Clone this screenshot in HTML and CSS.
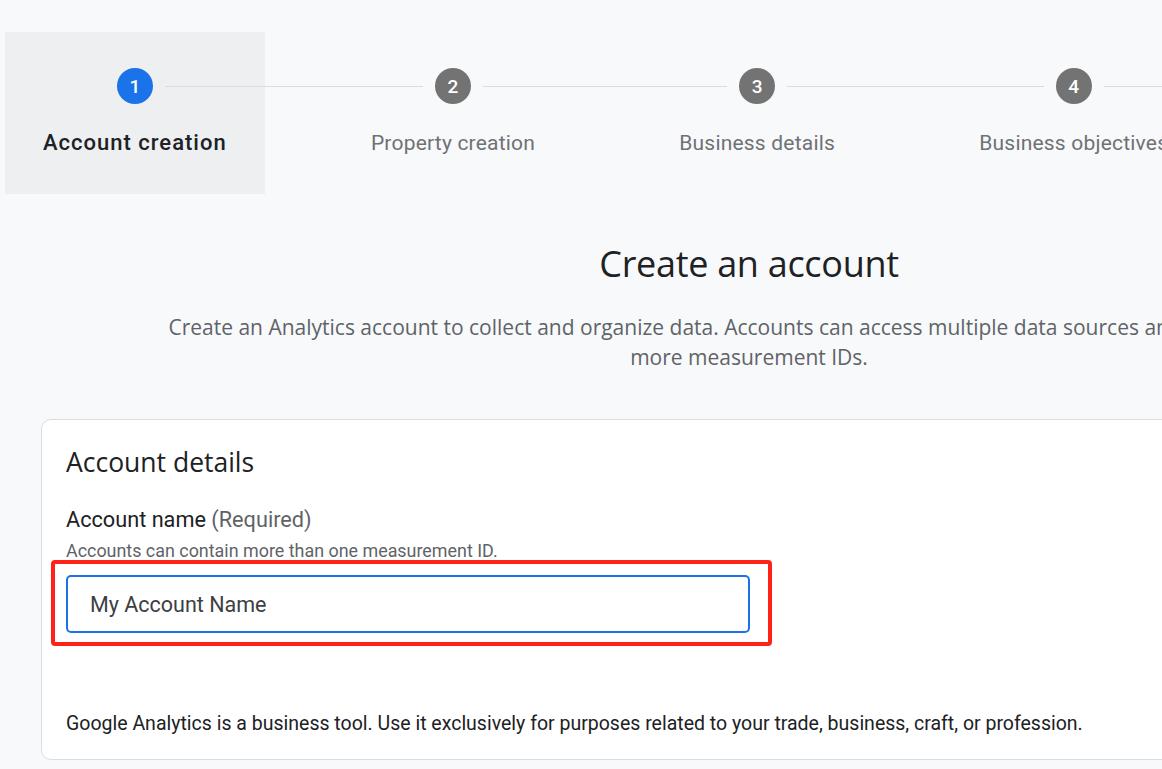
FILE: index.html
```html
<!DOCTYPE html>
<html lang="en">
<head>
<meta charset="utf-8">
<title>Create an account</title>
<link rel="stylesheet" href="styles.css">
</head>
<body>
<div class="page">
  <nav class="stepper">
    <div class="step active first">
      <div class="step-track"><span class="track-line"></span><span class="step-num">1</span><span class="track-line"></span></div>
      <div class="step-label">Account creation</div>
    </div>
    <div class="connector"></div>
    <div class="step">
      <div class="step-track"><span class="track-line"></span><span class="step-num">2</span><span class="track-line"></span></div>
      <div class="step-label">Property creation</div>
    </div>
    <div class="connector"></div>
    <div class="step">
      <div class="step-track"><span class="track-line"></span><span class="step-num">3</span><span class="track-line"></span></div>
      <div class="step-label">Business details</div>
    </div>
    <div class="connector"></div>
    <div class="step">
      <div class="step-track"><span class="track-line"></span><span class="step-num">4</span><span class="track-line"></span></div>
      <div class="step-label">Business objectives</div>
    </div>
    <div class="connector"></div>
    <div class="step last">
      <div class="step-track"><span class="track-line"></span><span class="step-num">5</span><span class="track-line"></span></div>
      <div class="step-label">Data collection</div>
    </div>
  </nav>

  <header class="intro">
    <h1 class="intro-title">Create an account</h1>
    <p class="intro-text">Create an Analytics account to collect and organize data. Accounts can access multiple data sources and contain one or more measurement IDs.</p>
  </header>

  <section class="card">
    <h2 class="card-title">Account details</h2>
    <label class="field-label" for="acct">Account name <span class="req">(Required)</span></label>
    <div class="field-hint">Accounts can contain more than one measurement ID.</div>
    <div class="field-wrap">
      <input id="acct" class="field-input" type="text" value="My Account Name">
      <div class="highlight"></div>
    </div>
    <p class="card-note">Google Analytics is a business tool. Use it exclusively for purposes related to your trade, business, craft, or profession.</p>
  </section>
</div>
</body>
</html>
```

FILE: styles.css
```css
html, body {
  margin: 0;
  padding: 0;
  background: #f8f9fa;
  overflow: hidden;
  height: 100%;
}

body {
  font-family: Roboto, "Noto Sans", "Liberation Sans", sans-serif;
  color: #202124;
}

.page {
  width: 1498px;
  padding-top: 32px;
}

/* Stepper */
.stepper {
  display: flex;
  align-items: flex-start;
  margin: 0 5px;
}

.step {
  display: flex;
  flex-direction: column;
  align-items: stretch;
  padding: 36px 0 51px;
  height: 75px;
}

.step.active {
  background: #eeeff1;
}

.step-track {
  display: flex;
  align-items: center;
  height: 36px;
}

.track-line {
  flex: 1;
  height: 1px;
  background: #dadce0;
}

.step-num {
  width: 36px;
  height: 36px;
  border-radius: 50%;
  background: #737373;
  color: #fff;
  font-size: 19px;
  font-weight: 500;
  display: flex;
  align-items: center;
  justify-content: center;
  margin: 0 12px;
  flex: none;
}

.step.active .step-num {
  background: #1a73e8;
}

.step.first .track-line:first-child,
.step.last .track-line:last-child {
  visibility: hidden;
}

.step-label {
  margin-top: 27px;
  padding: 0 38px;
  font-size: 21px;
  line-height: 24px;
  color: #6f7175;
  white-space: nowrap;
  text-align: center;
  letter-spacing: 0.2px;
}

.step.active .step-label {
  color: #202124;
  font-weight: 500;
  font-size: 22px;
  letter-spacing: 1px;
}

.connector {
  flex: 1;
  height: 1px;
  background: #dadce0;
  margin-top: 54px;
}

/* Intro */
.intro {
  text-align: center;
  margin-top: 46px;
}

.intro-title {
  margin: 0;
  font-family: "Open Sans", Roboto, sans-serif;
  font-weight: 400;
  font-size: 36px;
  line-height: 48px;
  color: #202124;
  letter-spacing: -0.3px;
}

.intro-text {
  margin: 24px auto 0;
  max-width: 1180px;
  font-family: "Open Sans", Roboto, sans-serif;
  font-size: 21px;
  line-height: 30px;
  color: #5f6368;
  font-weight: 400;
}

/* Card */
.card {
  margin: 47px 41px 0;
  background: #fff;
  border: 1px solid #dadce0;
  border-radius: 10px;
  padding: 26px 24px 22px;
}

.card-title {
  margin: 0;
  font-family: "Open Sans", Roboto, sans-serif;
  font-weight: 400;
  font-size: 26.5px;
  line-height: 32px;
  color: #202124;
}

.field-label {
  display: block;
  margin-top: 29px;
  font-size: 21.7px;
  line-height: 26px;
  color: #202124;
}

.req {
  color: #5f6368;
}

.field-hint {
  margin-top: 7px;
  font-size: 17.9px;
  line-height: 22px;
  color: #5f6368;
}

.field-wrap {
  position: relative;
  width: 684px;
  margin-top: 13px;
}

.field-input {
  box-sizing: border-box;
  display: block;
  width: 684px;
  height: 58px;
  border: 2px solid #1a73e8;
  border-radius: 5px;
  padding: 0 22px;
  font-family: Roboto, sans-serif;
  font-size: 21.5px;
  color: #3c4043;
  background: #fff;
  outline: none;
}

.highlight {
  position: absolute;
  left: -15px;
  top: -15px;
  width: 713px;
  height: 78px;
  border: 4px solid #ff2216;
  border-radius: 4px;
  pointer-events: none;
}

.card-note {
  margin: 78px 0 0;
  font-size: 19.5px;
  line-height: 26px;
  color: #202124;
}
```
